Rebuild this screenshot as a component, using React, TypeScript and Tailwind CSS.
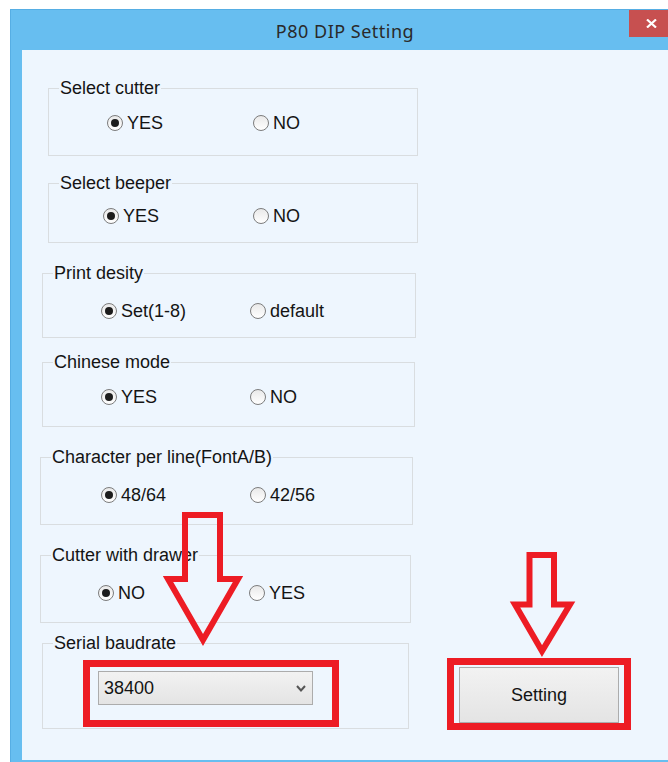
import type { ReactNode } from "react";

type Opt = { label: string; checked?: boolean };

function Radio({ label, checked }: Opt) {
  return (
    <div className="flex h-[20px] items-center gap-[4px]">
      <span className="flex h-[16px] w-[16px] shrink-0 items-center justify-center rounded-full border border-[#7c7c7c] bg-[linear-gradient(#e9e9e9,#ffffff)]">
        {checked && <span className="h-[8px] w-[8px] rounded-full bg-[#1c1c1c]" />}
      </span>
      <span className="leading-[20px]">{label}</span>
    </div>
  );
}

function Group({
  label,
  className,
  children,
}: {
  label: string;
  className: string;
  children: ReactNode;
}) {
  return (
    <div className={`flex flex-col border border-[#d9dde0] ${className}`}>
      <span className="-mt-[11px] ml-[10px] w-fit bg-[#eef6fe] px-[1px] leading-[20px]">{label}</span>
      {children}
    </div>
  );
}

function RadioRow({
  className,
  firstWidth,
  options,
}: {
  className: string;
  firstWidth: string;
  options: [Opt, Opt];
}) {
  return (
    <div className={`flex ${className}`}>
      <div className={firstWidth}>
        <Radio {...options[0]} />
      </div>
      <Radio {...options[1]} />
    </div>
  );
}

function DownArrow({ d, className }: { d: string; className: string }) {
  return (
    <svg className={className} fill="none" overflow="visible">
      <path d={d} stroke="#ed1c24" strokeWidth="6" strokeLinejoin="miter" strokeMiterlimit="10" />
    </svg>
  );
}

export default function App() {
  return (
    <div className="h-[762px] overflow-hidden bg-white pl-[10px] pt-[9px] font-['Liberation_Sans',Arial,sans-serif] text-[18px] text-[#141414]">
      <div className="flex h-[753px] flex-col overflow-hidden border-l border-t border-[#56aee4] bg-[#67bef0]">
        {/* title bar */}
        <div className="flex h-[40px] shrink-0">
          <div className="flex-1 pl-[50px] pt-[9px] text-center font-['Noto_Sans',sans-serif] text-[18px] leading-[24px] tracking-[0.5px] text-[#2a2a2a]">
            P80 DIP Setting
          </div>
          <div className="-mr-[6px] flex h-[27px] w-[45px] shrink-0 items-center justify-center bg-[#c75050]">
            <svg width="11" height="9" viewBox="0 0 11 9">
              <path d="M1 0.5 L10 8.5 M10 0.5 L1 8.5" stroke="#fff" strokeWidth="2.2" />
            </svg>
          </div>
        </div>

        {/* client area */}
        <div className="relative ml-[11px] flex h-[710px] shrink-0 items-end bg-[#eef6fe]">
          <div className="flex w-[400px] shrink-0 flex-col pb-[31px] pl-[18px] pt-[28px]">
            <Group label="Select cutter" className="ml-[8px] h-[68px] w-[370px]">
              <RadioRow
                className="mt-[15px] pl-[58px]"
                firstWidth="w-[146px]"
                options={[{ label: "YES", checked: true }, { label: "NO" }]}
              />
            </Group>
            <Group label="Select beeper" className="ml-[8px] mt-[27px] h-[60px] w-[370px]">
              <RadioRow
                className="mt-[13px] pl-[54px]"
                firstWidth="w-[150px]"
                options={[{ label: "YES", checked: true }, { label: "NO" }]}
              />
            </Group>
            <Group label="Print desity" className="ml-[2px] mt-[30px] h-[65px] w-[374px]">
              <RadioRow
                className="mt-[18px] pl-[58px]"
                firstWidth="w-[149px]"
                options={[{ label: "Set(1-8)", checked: true }, { label: "default" }]}
              />
            </Group>
            <Group label="Chinese mode" className="ml-[2px] mt-[24px] h-[65px] w-[373px]">
              <RadioRow
                className="mt-[15px] pl-[58px]"
                firstWidth="w-[149px]"
                options={[{ label: "YES", checked: true }, { label: "NO" }]}
              />
            </Group>
            <Group label="Character per line(FontA/B)" className="mt-[30px] h-[68px] w-[373px]">
              <RadioRow
                className="mt-[18px] pl-[60px]"
                firstWidth="w-[149px]"
                options={[{ label: "48/64", checked: true }, { label: "42/56" }]}
              />
            </Group>
            <Group label="Cutter with drawer" className="mt-[30px] h-[68px] w-[371px]">
              <RadioRow
                className="mt-[18px] pl-[57px]"
                firstWidth="w-[151px]"
                options={[{ label: "NO", checked: true }, { label: "YES" }]}
              />
            </Group>
            <Group label="Serial baudrate" className="ml-[2px] mt-[20px] h-[86px] w-[367px]">
              <div className="ml-[40px] mt-[7px] w-fit border-[7px] border-[#ed1c24] pb-[15px] pl-[8px] pr-[19px] pt-[4px]">
                <div className="flex h-[34px] w-[215px] items-center justify-between border border-[#acacac] bg-[linear-gradient(#f2f2f2,#e4e4e4)] pl-[5px] pr-[6px]">
                  <span className="leading-[20px]">38400</span>
                  <svg width="10" height="7" viewBox="0 0 10 7">
                    <path d="M1 1 L5 5.5 L9 1" fill="none" stroke="#555" strokeWidth="2" />
                  </svg>
                </div>
              </div>
            </Group>
          </div>

          <div className="ml-[25px] flex flex-col pb-[30px]">
            <DownArrow
              className="ml-[60px] h-[110px] w-[70px]"
              d="M22.5 7 L47 7 L47 56.5 L63 56.5 L35 103 L8 56.5 L22.5 56.5 Z"
            />
            <div className="w-fit border-[7px] border-[#ed1c24] px-[5px] pt-[2px]">
              <button className="flex h-[56px] w-[160px] items-center justify-center border border-[#acacac] bg-[linear-gradient(#f2f2f2,#e4e4e4)] leading-[20px]">
                Setting
              </button>
            </div>
          </div>

          <DownArrow
            className="absolute left-[134px] top-[456px] h-[145px] w-[95px]"
            d="M29 9 L64 9 L64 73 L82 73 L47 134 L12 73 L29 73 Z"
          />
        </div>
      </div>
    </div>
  );
}
